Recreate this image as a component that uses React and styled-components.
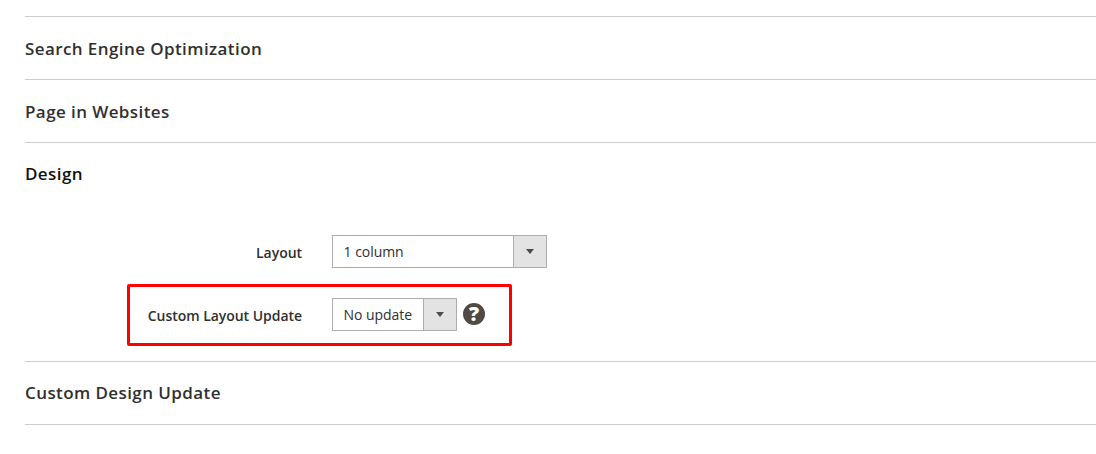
import React from "react";
import styled, { createGlobalStyle } from "styled-components";

const Global = createGlobalStyle`
  html, body { margin: 0; padding: 0; background: #fff; }
  body { font-family: "Open Sans", "Liberation Sans", sans-serif; color: #303030; }
`;

const Page = styled.div`
  width: 1096px;
  height: 454px;
  padding: 16px 0 0 25px;
  box-sizing: border-box;
  overflow: hidden;
`;

const Section = styled.section`
  border-top: 1px solid #cccccc;
  &:last-child { height: 1px; }
`;

const Title = styled.h2`
  margin: 0;
  height: 62px;
  display: flex;
  align-items: center;
  padding-top: ${(p) => (p.$drop ? "1px" : "0")};
  padding-bottom: ${(p) => (p.$open ? "1px" : "0")};
  box-sizing: border-box;
  font-size: 17px;
  line-height: 24px;
  font-weight: 600;
  letter-spacing: 0.41px;
  color: ${(p) => (p.$open ? "#111111" : "#303030")};
`;

const DesignBody = styled.div`
  padding: 30px 0 15px 102px;
`;

const Row = styled.div`
  display: flex;
  align-items: center;
  height: 33px;
  width: 385px;
  box-sizing: border-box;
  padding-left: 5px;
`;

const HighlightRow = styled(Row)`
  height: 62px;
  margin-top: 16px;
  border: 3px solid #ff0000;
  border-radius: 2px;
  padding-left: 2px;
  padding-bottom: 2px;
`;

const Label = styled.label`
  width: 170px;
  text-align: right;
  margin-right: 30px;
  padding-top: 2px;
  font-size: 14px;
  font-weight: 600;
  line-height: 20px;
  letter-spacing: -0.04px;
  color: #303030;
  flex: none;
  white-space: nowrap;
`;

const HighlightLabel = styled(Label)`
  padding-top: 4px;
`;

const Select = styled.div`
  display: flex;
  width: ${(p) => p.$w}px;
  height: 33px;
  box-sizing: border-box;
  border: 1px solid #adadad;
  background: #fff;
  flex: none;
`;

const Value = styled.span`
  flex: 1;
  padding-left: 10.6px;
  font-size: 14px;
  line-height: 31px;
  letter-spacing: -0.05px;
  color: #303030;
  white-space: nowrap;
`;

const Arrow = styled.span`
  width: 33px;
  flex: none;
  box-sizing: border-box;
  border-left: 1px solid #adadad;
  background: #e3e3e3;
  display: flex;
  align-items: center;
  justify-content: center;
`;

const Caret = styled.i`
  width: 0;
  height: 0;
  border-style: solid;
  border-width: 5px 4.5px 0 4.5px;
  border-color: #514943 transparent transparent transparent;
`;

const Help = styled.span`
  width: 22px;
  height: 22px;
  margin-left: 6px;
  flex: none;
  border-radius: 50%;
  background: #514943;
  color: #ffffff;
  font-size: 20px;
  font-weight: 800;
  line-height: 22px;
  text-align: center;
`;

export default function App() {
  return (
    <Page>
      <Global />
      <Section><Title $drop>Search Engine Optimization</Title></Section>
      <Section><Title $drop>Page in Websites</Title></Section>
      <Section>
        <Title $open>Design</Title>
        <DesignBody>
          <Row>
            <Label>Layout</Label>
            <Select $w={215}><Value>1 column</Value><Arrow><Caret /></Arrow></Select>
          </Row>
          <HighlightRow>
            <HighlightLabel>Custom Layout Update</HighlightLabel>
            <Select $w={125}><Value>No update</Value><Arrow><Caret /></Arrow></Select>
            <Help>?</Help>
          </HighlightRow>
        </DesignBody>
      </Section>
      <Section><Title>Custom Design Update</Title></Section>
      <Section />
    </Page>
  );
}
